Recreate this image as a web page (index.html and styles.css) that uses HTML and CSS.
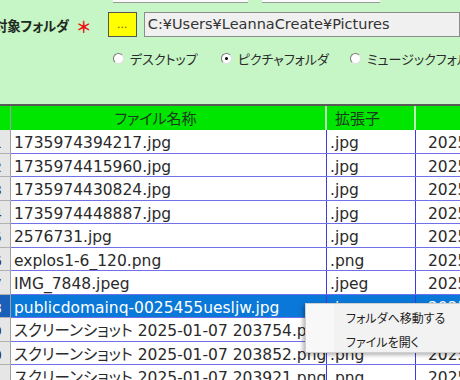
FILE: index.html
```html
<!DOCTYPE html>
<html>

<head>
    <meta charset="utf-8">
    <title>ファイル一覧</title>
    <link rel="stylesheet" href="styles.css">
</head>

<body>
    <div class="top-strip">
        <div class="strip-box first"></div>
        <div class="strip-box second"></div>
    </div>

    <div class="folder-row">
        <div class="folder-label">対象フォルダ</div>
        <div class="required">＊</div>
        <button class="browse-button">...</button>
        <div class="path-box">C:¥Users¥LeannaCreate¥Pictures</div>
    </div>

    <div class="radio-row">
        <label class="radio-item"><span class="radio"></span>デスクトップ</label>
        <label class="radio-item"><span class="radio checked"></span>ピクチャフォルダ</label>
        <label class="radio-item"><span class="radio"></span>ミュージックフォルダ</label>
    </div>

    <div class="grid">
        <div class="grid-row header">
            <div class="cell num"></div>
            <div class="cell name">ファイル名称</div>
            <div class="cell ext">拡張子</div>
            <div class="cell date"></div>
        </div>
        <div class="grid-row">
            <div class="cell num">1</div>
            <div class="cell name">1735974394217.jpg</div>
            <div class="cell ext">.jpg</div>
            <div class="cell date">2025/01/02 16:13</div>
        </div>
        <div class="grid-row">
            <div class="cell num">2</div>
            <div class="cell name">1735974415960.jpg</div>
            <div class="cell ext">.jpg</div>
            <div class="cell date">2025/01/02 16:13</div>
        </div>
        <div class="grid-row">
            <div class="cell num">3</div>
            <div class="cell name">1735974430824.jpg</div>
            <div class="cell ext">.jpg</div>
            <div class="cell date">2025/01/02 16:14</div>
        </div>
        <div class="grid-row">
            <div class="cell num">4</div>
            <div class="cell name">1735974448887.jpg</div>
            <div class="cell ext">.jpg</div>
            <div class="cell date">2025/01/02 16:14</div>
        </div>
        <div class="grid-row">
            <div class="cell num">5</div>
            <div class="cell name">2576731.jpg</div>
            <div class="cell ext">.jpg</div>
            <div class="cell date">2025/01/05 10:22</div>
        </div>
        <div class="grid-row">
            <div class="cell num">6</div>
            <div class="cell name">explos1-6_120.png</div>
            <div class="cell ext">.png</div>
            <div class="cell date">2025/01/05 10:25</div>
        </div>
        <div class="grid-row">
            <div class="cell num">7</div>
            <div class="cell name">IMG_7848.jpeg</div>
            <div class="cell ext">.jpeg</div>
            <div class="cell date">2025/01/06 09:41</div>
        </div>
        <div class="grid-row selected">
            <div class="cell num">8</div>
            <div class="cell name">publicdomainq-0025455uesljw.jpg</div>
            <div class="cell ext">.jpg</div>
            <div class="cell date">2025/01/06 11:02</div>
        </div>
        <div class="grid-row">
            <div class="cell num">9</div>
            <div class="cell name">スクリーンショット 2025-01-07 203754.png</div>
            <div class="cell ext">.png</div>
            <div class="cell date">2025/01/07 20:37</div>
        </div>
        <div class="grid-row">
            <div class="cell num">10</div>
            <div class="cell name">スクリーンショット 2025-01-07 203852.png</div>
            <div class="cell ext">.png</div>
            <div class="cell date">2025/01/07 20:38</div>
        </div>
        <div class="grid-row">
            <div class="cell num">11</div>
            <div class="cell name">スクリーンショット 2025-01-07 203921.png</div>
            <div class="cell ext">.png</div>
            <div class="cell date">2025/01/07 20:39</div>
        </div>
    </div>

    <div class="context-menu">
        <div class="menu-item">フォルダへ移動する</div>
        <div class="menu-item">ファイルを開く</div>
    </div>
</body>

</html>
```

FILE: styles.css
```css
body {
    margin: 0;
    width: 460px;
    height: 380px;
    overflow: hidden;
    position: relative;
    background-color: #c6f5c6;
    font-family: "DejaVu Sans", "Noto Sans CJK JP", sans-serif;
    font-feature-settings: "palt";
    color: #2a2a2a;
}

.top-strip {
    display: flex;
    height: 3px;
}

.strip-box {
    background-color: #fafafa;
    border-bottom: 1px solid #9a9a9a;
    box-sizing: border-box;
}

.strip-box.first {
    margin-left: 113px;
    width: 135px;
}

.strip-box.second {
    margin-left: 14px;
    width: 118px;
}

.folder-row {
    display: flex;
    align-items: center;
    margin-top: 9px;
    margin-left: -6px;
    height: 25px;
}

.folder-label {
    width: 87px;
    white-space: nowrap;
    font-family: "Noto Sans CJK JP", sans-serif;
    font-size: 13.5px;
    font-weight: bold;
    letter-spacing: -0.3px;
    color: #1e2a1e;
}

.required {
    width: 32px;
    padding-top: 3px;
    font-family: "Noto Sans CJK JP", sans-serif;
    font-size: 16px;
    font-weight: bold;
    color: #ee1111;
}

.browse-button {
    width: 30px;
    height: 25px;
    padding: 0;
    border: 1px solid #555;
    background-color: #ffff00;
    color: #6a5a00;
    font-family: "DejaVu Sans", sans-serif;
    font-size: 11px;
}

.path-box {
    margin-left: 7px;
    width: 330px;
    height: 25px;
    box-sizing: border-box;
    border: 1px solid #8c8c8c;
    background-color: #f0f0f0;
    padding-left: 3px;
    font-size: 14.5px;
    line-height: 23px;
    color: #333;
    white-space: nowrap;
}

.radio-row {
    display: flex;
    margin-top: 13px;
    padding-left: 113px;
    height: 16px;
    align-items: center;
}

.radio-item {
    display: flex;
    align-items: center;
    font-family: "Noto Sans CJK JP", sans-serif;
    font-size: 13px;
    color: #2a2a2a;
    white-space: nowrap;
    margin-right: 23px;
}

.radio-item:nth-child(2) {
    margin-right: 21px;
}

.radio {
    width: 11px;
    height: 11px;
    box-sizing: border-box;
    border-radius: 50%;
    border: 1px solid #7a7a7a;
    border-right-color: #e0e0e0;
    border-bottom-color: #e0e0e0;
    background-color: #fff;
    margin-right: 6px;
    position: relative;
}

.radio.checked::after {
    content: "";
    position: absolute;
    left: 3px;
    top: 3px;
    width: 3px;
    height: 3px;
    border-radius: 50%;
    background-color: #000;
}

.grid {
    margin-top: 38px;
    border-top: 2px solid #5a5a5a;
    margin-left: -19px;
}

.grid-row {
    display: flex;
    height: 23.5px;
    box-sizing: border-box;
    border-bottom: 1px solid #7070ea;
    background-color: #fff;
}

.grid-row.header {
    height: 24px;
    border-bottom: none;
    background-color: #00e600;
}

.cell {
    box-sizing: border-box;
    flex-shrink: 0;
    white-space: nowrap;
    overflow: hidden;
    padding-top: 1px;
    font-size: 15.5px;
    line-height: 24px;
    border-right: 1px solid #3c3ce0;
}

.cell.num {
    width: 30px;
    text-align: right;
    padding-right: 8px;
    background-color: #e6e6e6;
    border-right: 1px solid #a0a0a0;
    font-size: 14px;
    color: #333;
}

.cell.name {
    width: 316px;
    padding-left: 3px;
}

.cell.ext {
    width: 89px;
    padding-left: 3px;
}

.cell.date {
    width: 150px;
    padding-left: 12px;
    border-right: none;
}

.grid-row.header .cell {
    padding-top: 0;
    background-color: #00e600;
    border-right: 2px solid #b8f0b8;
    font-family: "Noto Sans CJK JP", sans-serif;
    font-size: 15px;
    line-height: 24px;
    color: #1b3a1b;
}

.grid-row.header .cell.num {
    border-right: 1px solid #a0a0a0;
}

.grid-row.header .cell.name {
    text-align: center;
    padding-right: 28px;
}

.grid-row.header .cell.ext {
    padding-left: 8px;
}

.grid-row:not(.header) .cell.num {
    border-bottom: 1px solid #b0b0b0;
    margin-bottom: -1px;
}

.grid-row.selected .cell {
    background-color: #0a78d8;
    color: #fff;
}

.grid-row.selected .cell.num {
    background-color: #1a5fb8;
}

.context-menu {
    position: absolute;
    left: 305px;
    top: 303px;
    width: 200px;
    height: 50px;
    box-sizing: border-box;
    padding-top: 2px;
    background-color: #f2f2f2;
    background-image: linear-gradient(to right, #f8f8f8 0, #f8f8f8 28px, #f2f2f2 28px);
    border: 1px solid #d0d0d0;
    box-shadow: -2px 2px 4px rgba(0, 0, 0, 0.3);
}

.menu-item {
    height: 24px;
    line-height: 24px;
    padding-left: 40px;
    font-family: "Noto Sans CJK JP", sans-serif;
    font-size: 12px;
    color: #222;
}
```
